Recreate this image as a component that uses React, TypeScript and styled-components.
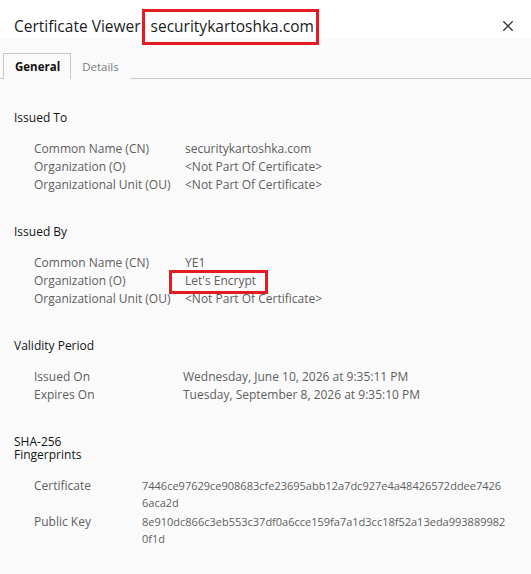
import React from "react";
import styled, { createGlobalStyle } from "styled-components";

const Global = createGlobalStyle`
  html, body { margin: 0; padding: 0; background: #fafafa; }
  body { font-family: "Open Sans", "Noto Sans", sans-serif; -webkit-font-smoothing: antialiased; }
`;

const Window = styled.div`
  width: 531px;
  height: 574px;
  background: #fafafa;
  display: flex;
  flex-direction: column;
  overflow: hidden;
`;

const TitleBar = styled.div`
  height: 39px;
  background: #ffffff;
  display: flex;
  align-items: flex-start;
  justify-content: space-between;
  padding: 16px 17px 0 14px;
  box-sizing: border-box;
  flex-shrink: 0;
`;

const Title = styled.div`
  font-size: 15.5px;
  line-height: 21px;
  color: #1b1b1b;
  display: flex;
  align-items: center;
  gap: 10px;
  white-space: nowrap;
`;

type Inset = { $t: number; $r: number; $b: number; $l: number };

const Highlight = styled.span<Inset>`
  position: relative;
  &::after {
    content: "";
    position: absolute;
    top: ${(p) => -p.$t}px;
    right: ${(p) => -p.$r}px;
    bottom: ${(p) => -p.$b}px;
    left: ${(p) => -p.$l}px;
    border: 3px solid #e31b22;
    pointer-events: none;
  }
`;

const CloseButton = styled.button`
  border: none;
  background: transparent;
  padding: 0;
  margin-top: 4px;
  width: 12px;
  height: 12px;
  display: flex;
  align-items: center;
  justify-content: center;
  cursor: pointer;
`;

const TabStrip = styled.div`
  margin-top: 14px;
  padding-left: 3px;
  display: flex;
  border-bottom: 1px solid #c9c9c9;
  height: 25px;
  flex-shrink: 0;
`;

const Tab = styled.div<{ $active?: boolean }>`
  height: 26px;
  box-sizing: border-box;
  padding: 0 ${(p) => (p.$active ? "10px 0 11px" : "10px")};
  display: flex;
  align-items: center;
  font-size: 11.5px;
  color: ${(p) => (p.$active ? "#111" : "#7a7a7a")};
  font-weight: ${(p) => (p.$active ? 700 : 400)};
  background: #fafafa;
  border: 1px solid ${(p) => (p.$active ? "#c9c9c9" : "transparent")};
  border-bottom: none;
`;

const Content = styled.div`
  padding: 0 14px;
  display: flex;
  flex-direction: column;
`;

const Section = styled.section<{ $top: number; $gap: number }>`
  margin-top: ${(p) => p.$top}px;
  display: flex;
  flex-direction: column;
  gap: ${(p) => p.$gap}px;
`;

const Heading = styled.div<{ $width?: number }>`
  font-size: 12px;
  line-height: 13px;
  color: #141414;
  width: ${(p) => (p.$width ? `${p.$width}px` : "auto")};
`;

const Table = styled.div<{ $labelWidth: number; $rowGap: number }>`
  display: grid;
  grid-template-columns: ${(p) => p.$labelWidth}px 1fr;
  row-gap: ${(p) => p.$rowGap}px;
  padding-left: 20px;
  font-size: 12px;
  color: #5e5e5e;
`;

const Label = styled.div`
  line-height: 18px;
  white-space: nowrap;
`;

const Value = styled.div<{ $lh: number }>`
  line-height: ${(p) => p.$lh}px;
  white-space: nowrap;
`;

const HashLine = styled.div`
  font-size: 11px;
`;

type Row = { label: string; value: string; mark?: boolean; lines?: string[] };

const issuedTo: Row[] = [
  { label: "Common Name (CN)", value: "securitykartoshka.com" },
  { label: "Organization (O)", value: "<Not Part Of Certificate>" },
  { label: "Organizational Unit (OU)", value: "<Not Part Of Certificate>" },
];

const issuedBy: Row[] = [
  { label: "Common Name (CN)", value: "YE1" },
  { label: "Organization (O)", value: "Let's Encrypt", mark: true },
  { label: "Organizational Unit (OU)", value: "<Not Part Of Certificate>" },
];

const validity: Row[] = [
  { label: "Issued On", value: "Wednesday, June 10, 2026 at 9:35:11 PM" },
  { label: "Expires On", value: "Tuesday, September 8, 2026 at 9:35:10 PM" },
];

const certHash = "7446ce97629ce908683cfe23695abb12a7dc927e4a48426572ddee74266aca2d";
const keyHash = "8e910dc866c3eb553c37df0a6cce159fa7a1d3cc18f52a13eda9938899820f1d";

const fingerprints: Row[] = [
  { label: "Certificate", value: certHash, lines: [certHash.slice(0, 58), certHash.slice(58)] },
  { label: "Public Key", value: keyHash, lines: [keyHash.slice(0, 60), keyHash.slice(60)] },
];

function Rows({ rows, labelWidth, rowGap = 0, lh = 18 }: { rows: Row[]; labelWidth: number; rowGap?: number; lh?: number }) {
  return (
    <Table $labelWidth={labelWidth} $rowGap={rowGap}>
      {rows.map((r) => (
        <React.Fragment key={r.label}>
          <Label>{r.label}</Label>
          <Value $lh={lh}>
            {r.lines ? (
              r.lines.map((l, i) => <HashLine key={i}>{l}</HashLine>)
            ) : r.mark ? (
              <Highlight $t={2} $b={5} $l={16} $r={12}>{r.value}</Highlight>
            ) : (
              r.value
            )}
          </Value>
        </React.Fragment>
      ))}
    </Table>
  );
}

export default function App() {
  return (
    <>
      <Global />
      <Window>
        <TitleBar>
          <Title>
            <span>Certificate Viewer</span>
            <Highlight $t={7} $b={8} $l={9} $r={5}>securitykartoshka.com</Highlight>
          </Title>
          <CloseButton aria-label="Close">
            <svg width="10" height="10" viewBox="0 0 10 10">
              <path d="M0.8 0.8 L9.2 9.2 M9.2 0.8 L0.8 9.2" stroke="#3a3a3a" strokeWidth="1.4" strokeLinecap="square" />
            </svg>
          </CloseButton>
        </TitleBar>
        <TabStrip>
          <Tab $active>General</Tab>
          <Tab>Details</Tab>
        </TabStrip>
        <Content>
          <Section $top={32} $gap={16}>
            <Heading>Issued To</Heading>
            <Rows rows={issuedTo} labelWidth={151} />
          </Section>
          <Section $top={31} $gap={16}>
            <Heading>Issued By</Heading>
            <Rows rows={issuedBy} labelWidth={151} />
          </Section>
          <Section $top={31} $gap={16}>
            <Heading>Validity Period</Heading>
            <Rows rows={validity} labelWidth={149} />
          </Section>
          <Section $top={31} $gap={16}>
            <Heading $width={70}>SHA-256 Fingerprints</Heading>
            <Rows rows={fingerprints} labelWidth={108} rowGap={2} lh={17} />
          </Section>
        </Content>
      </Window>
    </>
  );
}
